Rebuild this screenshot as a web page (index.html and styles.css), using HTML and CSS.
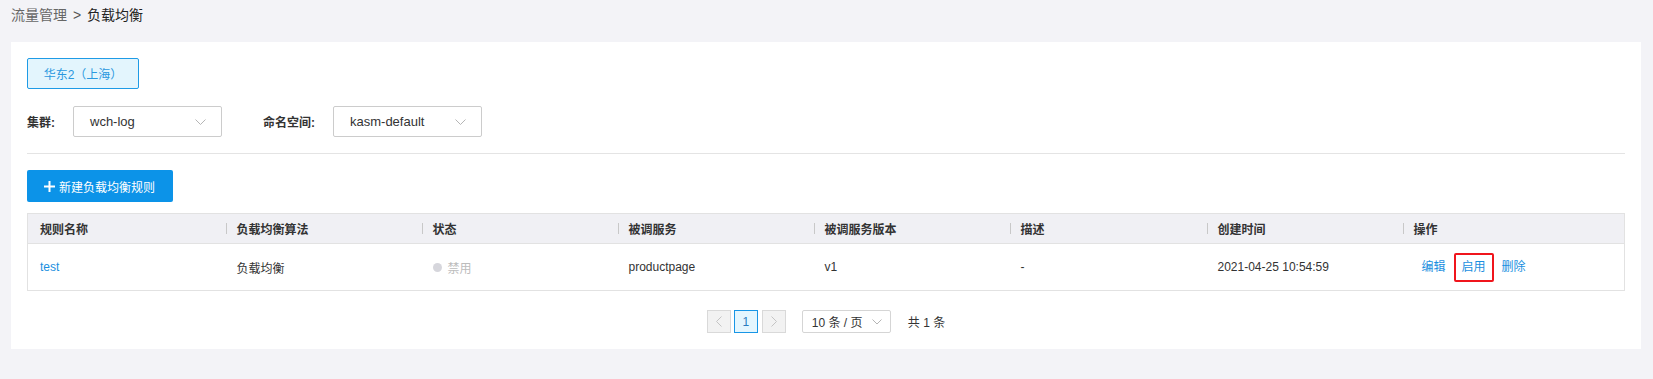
FILE: index.html
```html
<!DOCTYPE html>
<html lang="zh">
<head>
    <meta charset="UTF-8">
    <title>负载均衡</title>
    <link rel="stylesheet" href="styles.css">
</head>
<body>
    <div class="crumb">
        <span class="crumb-parent">流量管理</span>
        <span class="crumb-sep">&gt;</span>
        <span class="crumb-current">负载均衡</span>
    </div>

    <div class="card">
        <div class="region-tab">华东2（上海）</div>

        <div class="filters">
            <label class="filter-label">集群:</label>
            <div class="select">
                <span>wch-log</span>
                <svg class="caret" width="11" height="6" viewBox="0 0 11 6"><path d="M0.5 0.5 L5.5 5.5 L10.5 0.5" fill="none" stroke="#b5b5b5" stroke-width="1"/></svg>
            </div>
            <label class="filter-label ns">命名空间:</label>
            <div class="select">
                <span>kasm-default</span>
                <svg class="caret" width="11" height="6" viewBox="0 0 11 6"><path d="M0.5 0.5 L5.5 5.5 L10.5 0.5" fill="none" stroke="#b5b5b5" stroke-width="1"/></svg>
            </div>
        </div>

        <div class="divider"></div>

        <button class="btn-primary">
            <svg width="11" height="11" viewBox="0 0 11 11"><path d="M5.5 0 V11 M0 5.5 H11" stroke="#fff" stroke-width="2"/></svg>
            新建负载均衡规则
        </button>

        <table class="rules">
            <colgroup>
                <col style="width:198px"><col style="width:196px"><col style="width:196px"><col style="width:196px">
                <col style="width:196px"><col style="width:197px"><col style="width:196px"><col>
            </colgroup>
            <thead>
                <tr>
                    <th>规则名称</th>
                    <th>负载均衡算法</th>
                    <th>状态</th>
                    <th>被调服务</th>
                    <th>被调服务版本</th>
                    <th>描述</th>
                    <th>创建时间</th>
                    <th>操作</th>
                </tr>
            </thead>
            <tbody>
                <tr>
                    <td><a class="link">test</a></td>
                    <td>负载均衡</td>
                    <td><span class="status"><i class="dot"></i>禁用</span></td>
                    <td>productpage</td>
                    <td>v1</td>
                    <td>-</td>
                    <td>2021-04-25 10:54:59</td>
                    <td class="actions">
                        <a class="link act">编辑</a><a class="link act marked">启用</a><a class="link act">删除</a>
                    </td>
                </tr>
            </tbody>
        </table>

        <div class="pager">
            <span class="page-btn disabled">
                <svg width="6" height="11" viewBox="0 0 6 11"><path d="M5.5 0.5 L0.5 5.5 L5.5 10.5" fill="none" stroke="#c4c4c4"/></svg>
            </span>
            <span class="page-btn active">1</span>
            <span class="page-btn disabled">
                <svg width="6" height="11" viewBox="0 0 6 11"><path d="M0.5 0.5 L5.5 5.5 L0.5 10.5" fill="none" stroke="#c4c4c4"/></svg>
            </span>
            <div class="page-size">
                <span>10 条 / 页</span>
                <svg width="10" height="6" viewBox="0 0 10 6"><path d="M0.5 0.5 L5 5 L9.5 0.5" fill="none" stroke="#b5b5b5"/></svg>
            </div>
            <span class="total">共 1 条</span>
        </div>
    </div>
</body>
</html>
```

FILE: styles.css
```css
body {
    margin: 0;
    background: #f3f3f7;
    font-family: "Liberation Sans", "Noto Sans CJK SC", sans-serif;
    font-size: 12px;
    color: #333;
}
.crumb {
    height: 30px;
    line-height: 30px;
    padding-left: 11px;
    margin-bottom: 12px;
    font-size: 14px;
}
.crumb-parent {
    color: #666;
}
.crumb-sep {
    color: #555;
    margin: 0 2px;
}
.crumb-current {
    color: #222;
}
.card {
    background: #fff;
    margin: 0 12px 0 11px;
    padding: 16px 16px 16px;
}
.region-tab {
    display: inline-flex;
    align-items: center;
    justify-content: center;
    box-sizing: border-box;
    width: 112px;
    height: 31px;
    border: 1px solid #1e9be6;
    border-radius: 2px;
    background: #e3f5fd;
    color: #2a98df;
}
.filters {
    display: flex;
    align-items: center;
    margin-top: 17px;
}
.filter-label {
    font-weight: bold;
    width: 46px;
}
.filter-label.ns {
    margin-left: 41px;
    width: 70px;
}
.select {
    box-sizing: border-box;
    width: 149px;
    height: 31px;
    border: 1px solid #ccc;
    border-radius: 2px;
    display: flex;
    align-items: center;
    justify-content: space-between;
    padding: 0 15px 0 16px;
    font-size: 13px;
    color: #333;
}
.divider {
    height: 1px;
    background: #e4e4e4;
    margin: 16px 0 16px;
}
.btn-primary {
    display: flex;
    align-items: center;
    gap: 4px;
    box-sizing: border-box;
    width: 146px;
    height: 32px;
    padding: 0 0 0 17px;
    border: none;
    border-radius: 2px;
    background: #0c93e8;
    color: #fff;
    font-family: inherit;
    font-size: 12px;
}
.rules {
    margin-top: 11px;
    width: 100%;
    border-collapse: collapse;
    table-layout: fixed;
    border: 1px solid #e2e2e2;
}
.rules th {
    height: 29px;
    background: #f0f0f4;
    text-align: left;
    font-weight: bold;
    padding: 0 0 0 11px;
    position: relative;
    border-bottom: 1px solid #e2e2e2;
}
.rules th::before {
    content: "";
    position: absolute;
    left: 0;
    top: 9px;
    width: 1px;
    height: 11px;
    background: #c8c8c8;
}
.rules th:first-child::before {
    display: none;
}
.rules th:first-child,
.rules td:first-child {
    padding-left: 12px;
}
.rules td {
    height: 46px;
    padding: 0 0 0 11px;
}
.link {
    color: #1a8fe0;
    cursor: pointer;
}
.status {
    display: inline-flex;
    align-items: center;
    gap: 6px;
    color: #bcbcbc;
}
.dot {
    width: 9px;
    height: 9px;
    border-radius: 50%;
    background: #d6d6dc;
}
.rules td.actions {
    padding-left: 11px;
}
.act {
    display: inline-block;
    padding: 0 8px;
    line-height: 29px;
    vertical-align: middle;
}
.marked {
    outline: 2px solid #f0151c;
    outline-offset: -2px;
    border-radius: 2px;
}
.pager {
    display: flex;
    justify-content: center;
    align-items: center;
    margin-top: 19px;
}
.page-btn {
    box-sizing: border-box;
    width: 24px;
    height: 23px;
    border: 1px solid #d9d9d9;
    display: inline-flex;
    align-items: center;
    justify-content: center;
    margin-right: 3px;
}
.page-btn.disabled {
    background: #f2f2f2;
}
.page-btn.active {
    background: #e4f6fe;
    border-color: #1896e6;
    color: #2a7cc0;
    margin-right: 4px;
}
.page-size {
    box-sizing: border-box;
    width: 89px;
    height: 23px;
    border: 1px solid #d5d5d5;
    border-radius: 2px;
    margin-left: 13px;
    display: flex;
    align-items: center;
    justify-content: space-between;
    padding: 0 8px 0 9px;
}
.total {
    margin-left: 17px;
}
```
